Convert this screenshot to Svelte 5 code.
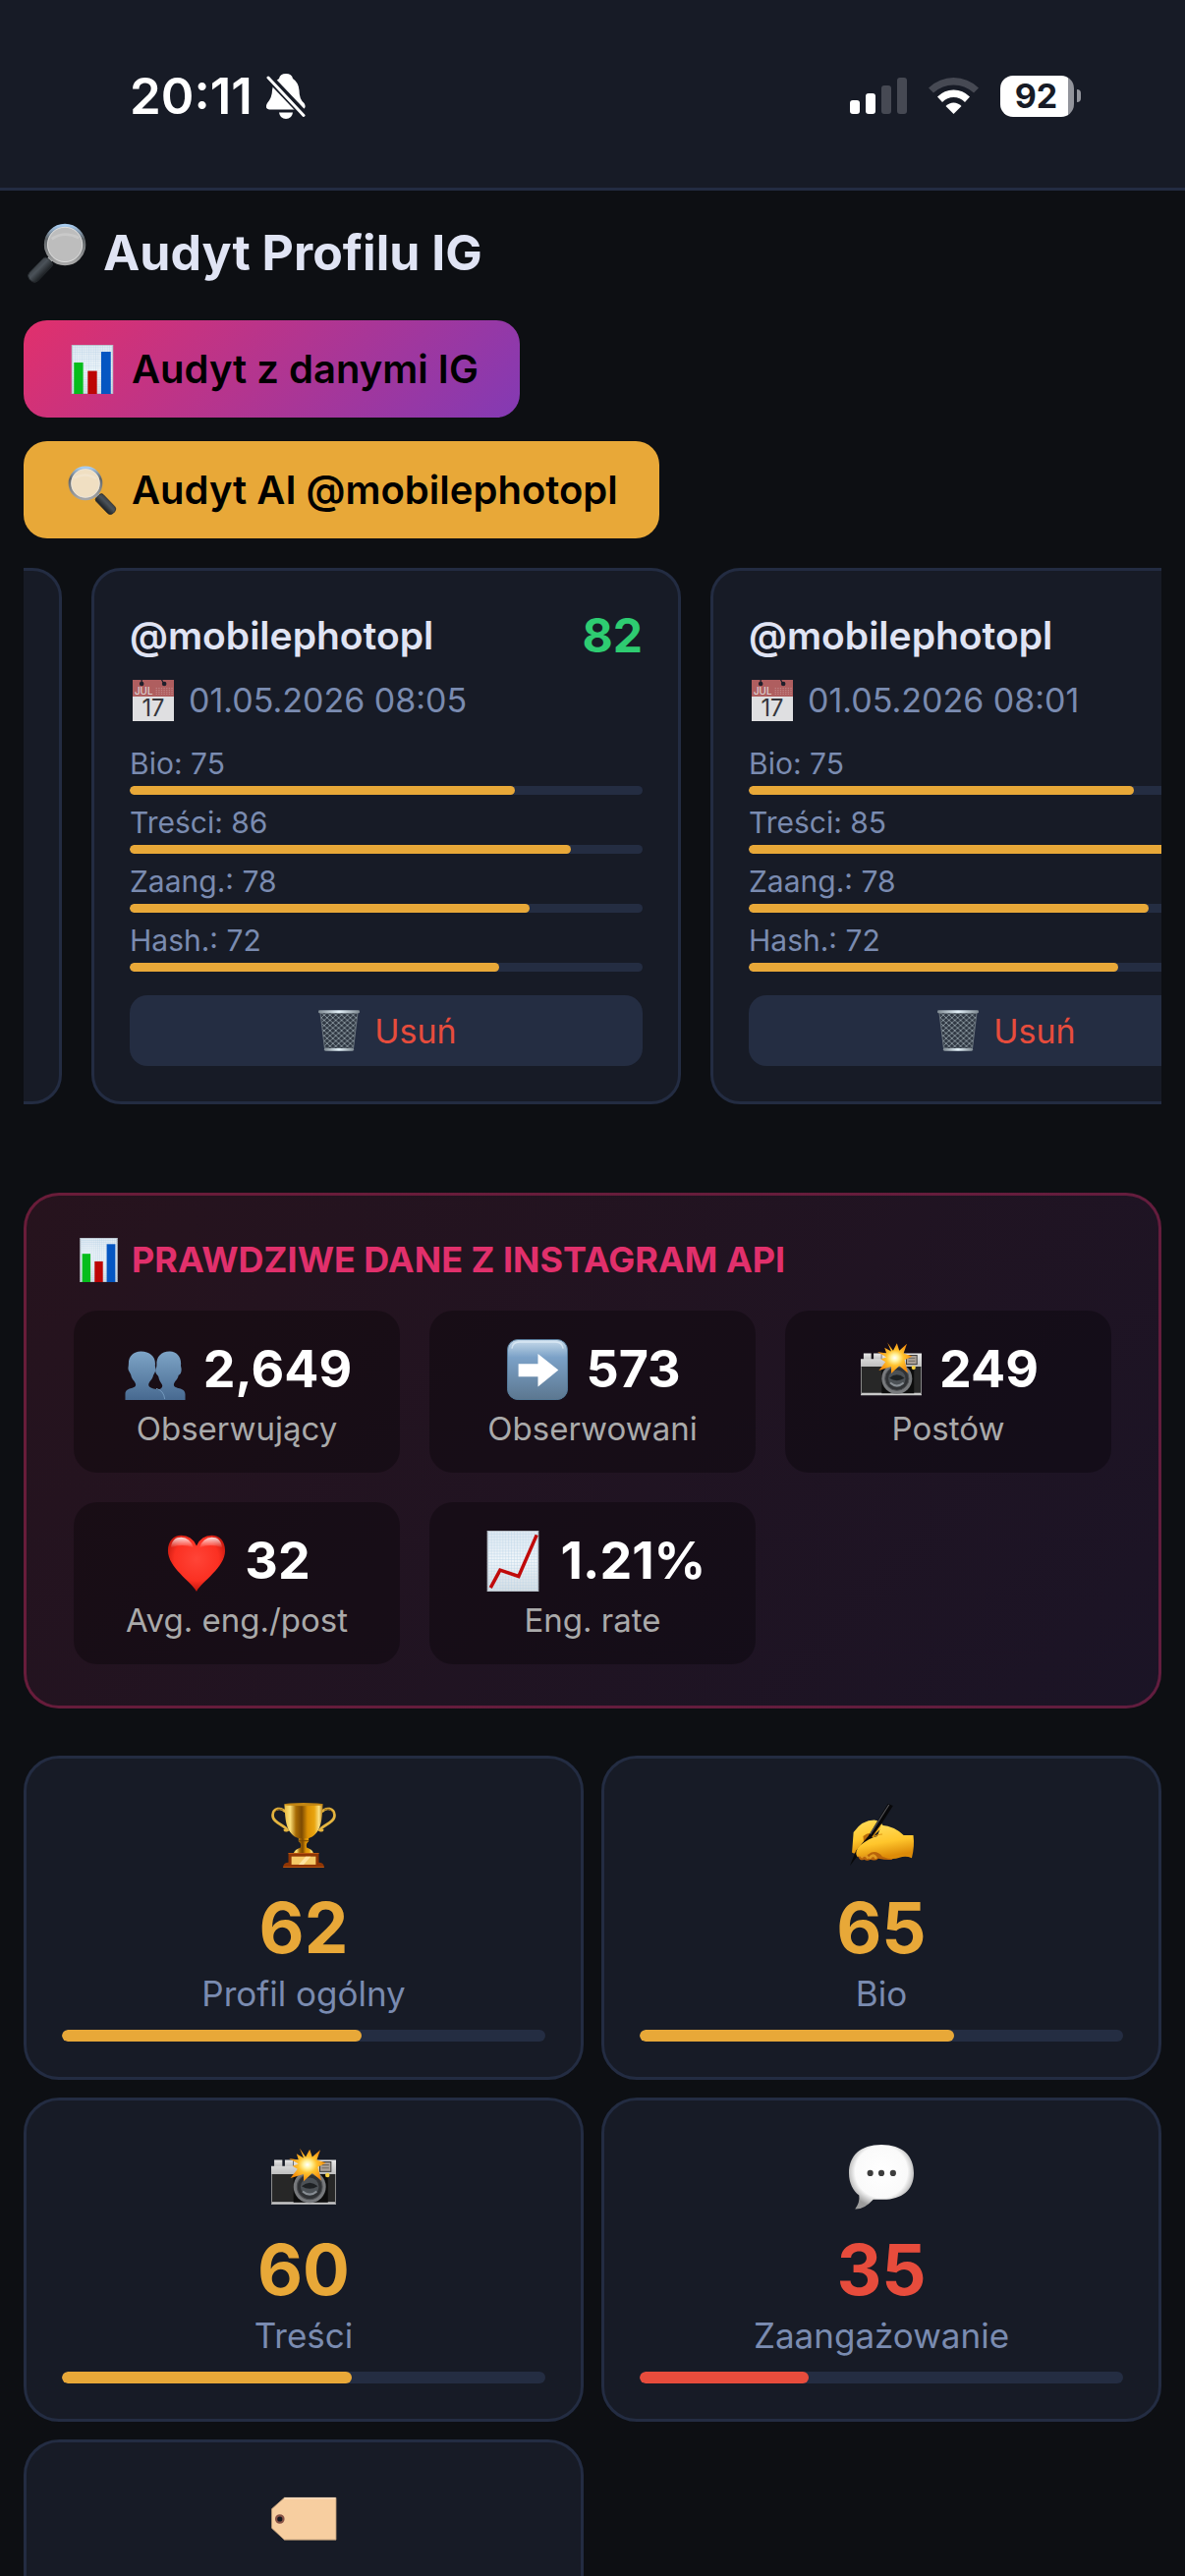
<script>
  import { onMount } from 'svelte';

  let strip;

  const history = [
    { name: '', bars: [] },
    {
      name: '@mobilephotopl', score: 82, date: '01.05.2026 08:05',
      bars: [['Bio', 75], ['Treści', 86], ['Zaang.', 78], ['Hash.', 72]]
    },
    {
      name: '@mobilephotopl', date: '01.05.2026 08:01',
      bars: [['Bio', 75], ['Treści', 85], ['Zaang.', 78], ['Hash.', 72]]
    }
  ];

  const stats = [
    { icon: 'people', value: '2,649', label: 'Obserwujący' },
    { icon: 'arrow', value: '573', label: 'Obserwowani' },
    { icon: 'camera', value: '249', label: 'Postów' },
    { icon: 'heart', value: '32', label: 'Avg. eng./post' },
    { icon: 'trend', value: '1.21%', label: 'Eng. rate' }
  ];

  const scores = [
    { icon: 'trophy', value: 62, label: 'Profil ogólny' },
    { icon: 'hand', value: 65, label: 'Bio' },
    { icon: 'camera', value: 60, label: 'Treści' },
    { icon: 'bubble', value: 35, label: 'Zaangażowanie', low: true },
    { icon: 'tag' }
  ];

  onMount(() => {
    strip.scrollLeft = 561;
  });
</script>

{#snippet icon(name)}
  <svg class="emoji" viewBox="0 0 64 64" aria-hidden="true">
    {#if name === 'search' || name === 'searchLeft'}
      <defs>
        <linearGradient id="rim" x1="0" y1="0" x2="0" y2="1">
          <stop offset="0" stop-color="#a9cdf0" /><stop offset="0.35" stop-color="#5f6468" /><stop offset="1" stop-color="#a8a8a8" />
        </linearGradient>
        <linearGradient id="grip" x1="0" y1="0" x2="1" y2="1">
          <stop offset="0" stop-color="#14171a" /><stop offset="0.45" stop-color="#4b5259" /><stop offset="0.7" stop-color="#15181b" /><stop offset="1" stop-color="#060708" />
        </linearGradient>
      </defs>
      <g transform={name === 'searchLeft' ? 'translate(64 0) scale(-1 1)' : undefined}>
        <path d="M22 42 27 37" stroke="#a9adb1" stroke-width="6" />
        <path d="M3 53 18 37.5q2-2 5 .5l4 4q2 2 0 4.5L12 62q-3 3-7 0l-2-2q-3-4 0-7Z" fill="url(#grip)" stroke="#24282c" />
        <circle cx="41" cy="23" r="20.5" fill={name === 'searchLeft' ? '#f0dfc2' : '#bdbdbd'} stroke="url(#rim)" stroke-width="3.5" />
        <circle cx="41" cy="23" r="18.5" fill="none" stroke="#e8e8e8" stroke-width="1" opacity="0.8" />
        <path d="M27 17q13-9 29-1" fill="none" stroke="#fff" stroke-width="3" opacity="0.18" />
      </g>
    {:else if name === 'chart' || name === 'trend'}
      <defs>
        <pattern id="grid" width="3" height="3" patternUnits="userSpaceOnUse">
          <path d="M0 0H3M0 0V3" stroke="#b8d3e6" stroke-width="0.8" />
        </pattern>
        <linearGradient id="paper" x1="0" y1="0" x2="0" y2="1">
          <stop offset="0" stop-color="#dfe9f2" /><stop offset="0.5" stop-color="#f1f6fa" /><stop offset="1" stop-color="#d5dde3" />
        </linearGradient>
      </defs>
      <rect x="5" width="54" height="64" fill="url(#paper)" />
      <rect x="5" width="54" height="64" fill="url(#grid)" />
      <rect x="5.5" y="0.5" width="53" height="63" fill="none" stroke="#b4bcc4" />
      {#if name === 'chart'}
        <rect x="8" y="23" width="12" height="41" fill="#06bd1c" />
        <rect x="26" y="34" width="12" height="30" fill="#bd0505" />
        <rect x="43.5" y="9" width="12.5" height="55" fill="#0556c2" />
      {:else}
        <path d="M8.5 60 18.5 41.5 38 48 57 4.5" fill="none" stroke="#c00a0a" stroke-width="3.6" />
      {/if}
    {:else if name === 'calendar'}
      <rect x="0" y="0" width="64" height="64" fill="#fdfdfd" />
      <path d="M0 0H64V26H0Z" fill="#c66968" />
      <circle cx="14" cy="6" r="3.5" fill="#20202c" /><circle cx="49" cy="6" r="3.5" fill="#20202c" />
      <path d="M14 0V5M45 0 48 5" stroke="#20202c" stroke-width="2" />
      <path d="M36 13H62M36 16H62M36 19H62M36 22H62" stroke="#e3a5a4" stroke-width="1.2" stroke-dasharray="2 2" />
      <text x="3" y="23" class="cal" font-size="15" fill="#fff">JUL</text>
      <text x="32" y="57" class="cal" font-size="36" text-anchor="middle" fill="#3b3b3f">17</text>
    {:else if name === 'trash'}
      <defs>
        <pattern id="mesh" width="9" height="8" patternUnits="userSpaceOnUse">
          <path d="M0 0 9 8M9 0 0 8" stroke="#93a0a8" stroke-width="1.3" />
        </pattern>
        <linearGradient id="steel"><stop offset="0" stop-color="#7d8890" /><stop offset="0.5" stop-color="#e4f2fa" /><stop offset="1" stop-color="#7d8890" /></linearGradient>
      </defs>
      <path d="M3 4H61L54 61H10Z" fill="#303843" />
      <path d="M3 4H61L54 61H10Z" fill="url(#mesh)" stroke="#68727b" stroke-width="1.5" />
      <rect x="0" y="0.5" width="64" height="4.5" rx="2" fill="url(#steel)" />
      <rect x="9" y="59.5" width="46" height="4" rx="2" fill="url(#steel)" />
    {:else if name === 'people'}
      <defs>
        <linearGradient id="person" x1="0" y1="0" x2="0" y2="1">
          <stop offset="0" stop-color="#7da4c6" /><stop offset="1" stop-color="#476990" />
        </linearGradient>
      </defs>
      <g fill="url(#person)">
        <path d="M47 13c-9 0-14 6-13.5 14 0 4-2 5-1 8s3 3 3 5c1 5 4 7 4 9 0 5-9 4-12 8q-1 3-1 7H63.5V58c0-8-12-5-12-10 0-3 4-5 5-10 2-1 3-3 3-6s-1-3-.5-6c0-8-5-13-11.5-13Z" />
        <path d="M17 13C9 13 4 18 4 26c0 3-1 4 0 7 1 2 2 3 2.5 5 1 5 5 7 5 10 0 5-11 2-11 10v6H42V59c-1-8-17-5-17-11 0-3 4-5 5-10 1-2 2-3 2.5-6 0-3-1-3-.5-6 0-8-6-13-15-13Z" />
      </g>
      <path d="M33 52q8 2 9 11" fill="none" stroke="#7399bd" stroke-width="1" />
    {:else if name === 'arrow'}
      <defs>
        <linearGradient id="tile" x1="0" y1="0" x2="0" y2="1">
          <stop offset="0" stop-color="#c9dcec" /><stop offset="0.2" stop-color="#94b4d2" /><stop offset="0.3" stop-color="#7ba1c7" /><stop offset="1" stop-color="#5c7790" />
        </linearGradient>
      </defs>
      <rect x="0.5" y="0.5" width="63" height="63" rx="11" fill="url(#tile)" stroke="#557a99" />
      <path d="M5 10Q6 3 13 3H51Q58 3 59 10" fill="none" stroke="#e4f0fa" stroke-width="1.5" opacity="0.7" />
      <path d="M12 26H32.5V15.5L54 32.5 32.5 50V39.5H12Z" fill="#fff" />
    {:else if name === 'camera'}
      <defs>
        <radialGradient id="flash"><stop offset="0" stop-color="#fff" /><stop offset="0.22" stop-color="#fff3a0" /><stop offset="0.5" stop-color="#ffc22e" /><stop offset="1" stop-color="#f58a0c" /></radialGradient>
        <linearGradient id="silver" x1="0" y1="0" x2="0" y2="1"><stop offset="0" stop-color="#e9e9e9" /><stop offset="1" stop-color="#bcbcbc" /></linearGradient>
      </defs>
      <path d="M3 15h8v7H3zM13.5 15h8v7h-8z" fill="url(#silver)" />
      <path d="M0 21H22V15H64V30H0Z" fill="url(#silver)" />
      <path d="M0 29H64V58H0Z" fill="#272727" />
      <path d="M0 56.5H64V59H0Z" fill="#c9c9c9" />
      <path d="M.5 29V58M63.5 29V58" stroke="#8a8a8a" />
      <rect x="22" y="29" width="34" height="28" fill="#0c0c0c" />
      <circle cx="38" cy="41.5" r="16" fill="#77797c" />
      <circle cx="38" cy="41.5" r="12.5" fill="#303235" stroke="#505255" />
      <circle cx="38" cy="41.5" r="9" fill="#4c5156" />
      <path d="M30 41q8-7 16 0-8 5-16 0Z" fill="#1e2124" />
      <path d="M31 46q7 6 14 0" stroke="#888e94" fill="none" stroke-width="2" />
      <rect x="48" y="17" width="11" height="9.5" fill="#aaa097" stroke="#3a3a3a" />
      <path d="M50 20H57M50 23H57" stroke="#706960" />
      <circle cx="55.5" cy="30" r="2.2" fill="#f5cf42" />
      <path d="M28 3.5 34 12 38 4.5 40.5 12 48.5 5 45 15 54 18 46 22 49.5 35.5 40.5 28 32 36 32 29 19 33 26 24 21 21 27 19 17.5 13.5 27 15 25 9 32 13Z" fill="url(#flash)" />
    {:else if name === 'heart'}
      <defs>
        <radialGradient id="love" cx="0.5" cy="0.42" r="0.65"><stop offset="0" stop-color="#ff4437" /><stop offset="0.6" stop-color="#fb3022" /><stop offset="1" stop-color="#a90c04" /></radialGradient>
        <linearGradient id="shine" x1="0" y1="0" x2="0" y2="1"><stop offset="0" stop-color="#fff" stop-opacity="0.85" /><stop offset="1" stop-color="#fff" stop-opacity="0" /></linearGradient>
      </defs>
      <path d="M32 64C26 53 2 39 2 21 2 11 8 5 16 5q11 0 16 11Q37 5 48 5c8 0 14 6 14 16 0 18-24 32-30 43Z" fill="url(#love)" />
      <path d="M5 18C6 10 10 7 16 7q9 0 13 11-12-5-24 0ZM59 18C58 10 54 7 48 7q-9 0-13 11 12-5 24 0Z" fill="url(#shine)" />
    {:else if name === 'trophy'}
      <defs>
        <linearGradient id="gold"><stop offset="0" stop-color="#e8b93e" /><stop offset="0.15" stop-color="#fbe07a" /><stop offset="0.3" stop-color="#a86c05" /><stop offset="0.45" stop-color="#7c4a02" /><stop offset="0.6" stop-color="#d98f04" /><stop offset="0.78" stop-color="#e9a510" /><stop offset="0.9" stop-color="#fae084" /><stop offset="1" stop-color="#b5790b" /></linearGradient>
      </defs>
      <g fill="none" stroke-width="2.6">
        <path d="M14 9C10 4 2 5 1.5 12 1 20 14 22 16 27q-2 1-3-1" stroke="#e5b540" />
        <path d="M50 9c4-5 12-4 12.5 3C63 20 50 22 48 27q2 1 3-1" stroke="#e5b540" />
        <path d="M12 7Q6 4 3 10M52 7q6-3 9 3" stroke="#8b5b0b" stroke-width="0.8" />
      </g>
      <path d="M13 1.5H51C50 17 50 31 36 35.5H28C14 31 14 17 13 1.5Z" fill="url(#gold)" />
      <ellipse cx="32" cy="1.6" rx="19" ry="1.6" fill="#c38613" />
      <path d="M27 35H37V38Q34 40 35 44 41 46 42 50H22Q23 46 29 44 30 40 27 38Z" fill="url(#gold)" />
      <path d="M27 37.5H37" stroke="#7c4a02" />
      <path d="M17 49.5H47V59Q52 59 52.5 64H11.5Q12 59 17 59Z" fill="#8f3504" />
      <path d="M17 50H47M12 63.5H52" stroke="#b85410" />
      <rect x="20" y="53" width="24" height="8" fill="#f5ca68" />
      <path d="M27 61 34 53H39L32 61Z" fill="#ffe3a0" />
    {:else if name === 'hand'}
      <defs>
        <linearGradient id="skin" x1="0" y1="0" x2="0.3" y2="1"><stop offset="0" stop-color="#ffe063" /><stop offset="0.6" stop-color="#ffc62c" /><stop offset="1" stop-color="#dd8b08" /></linearGradient>
      </defs>
      <path d="M12 47 9 53q2 5 6 3 3 2 6 0 5 2 8-1 9 2 14 1l-3-10Z" fill="#b9640a" />
      <path d="M12 54q4-5 7 1M20 55q4-6 7 0" fill="none" stroke="#e19a20" stroke-width="2.5" />
      <path d="M3 49 4.5 29Q13 17 25 17 31 18 34 23L24 33Q19 34 12 43L8 49Q5 51 3 49Z" fill="url(#skin)" />
      <path d="M14 33q7-6 10 0l-9 9Z" fill="#b86b0b" />
      <path d="M38.5 1 43.5 3 23 35 12 48 1 62 7 47 19 33Z" fill="#08080a" />
      <path d="M39.5 2 21 31" stroke="#5b5b60" />
      <path d="M32 22Q45 23 54 32H63.5Q65 43 62 54.5 56 52 50 54 42 57 33 53 28 47 22 49 15 54 8 53 5 48 11 42 20 35 28 33Z" fill="url(#skin)" />
      <path d="M31 23 23 34Q29 31 33 31" fill="none" stroke="#e09a15" />
    {:else if name === 'bubble'}
      <defs>
        <radialGradient id="cloud" cx="0.5" cy="0.42" r="0.56"><stop offset="0" stop-color="#fff" /><stop offset="0.72" stop-color="#fafafa" /><stop offset="1" stop-color="#9c9c9c" /></radialGradient>
      </defs>
      <path d="M32 0C53 0 64 11 64 28S52 54 34 54H24Q15 64 6 63.5 11 57 10 50C4 45 0 38 0 28 0 11 11 0 32 0Z" fill="url(#cloud)" />
      <g fill="#3d3d3d"><circle cx="21" cy="28" r="3" /><circle cx="32" cy="28" r="3" /><circle cx="43.5" cy="28" r="3" /></g>
    {:else if name === 'tag'}
      <path d="M13 11H64V52.5H13L.5 41V22Z" fill="#f7cea0" stroke="#b99874" stroke-width="0.8" />
      <path d="M13 11.5H63.5" stroke="#ffe6c9" />
      <circle cx="8.5" cy="32" r="3.6" fill="#151720" stroke="#875347" stroke-width="2.2" />
    {/if}
  </svg>
{/snippet}

<div class="page">
  <header>
    <div class="clock">
      <span>20:11</span>
      <svg class="bell" viewBox="0 0 40 46" aria-hidden="true">
        <path d="M20 0q6 0 7 5 6 4 6.5 12 0 9 5 13 3 5-2 6.5H3q-5-1-2-6.5Q6 24 6 17 7 8 13 5 14 0 20 0Z" fill="#fff" />
        <path d="M13 39.5H27Q26 46 20 46T13 39.5Z" fill="#fff" />
        <path d="M1 2 40 43" stroke="#171b26" stroke-width="8" />
        <path d="M2 4 38 42.5" stroke="#fff" stroke-width="3" stroke-linecap="round" />
      </svg>
    </div>
    <div class="signals">
      <svg class="cell" viewBox="0 0 58 37" aria-hidden="true">
        <rect y="23" width="10" height="14" rx="3" fill="#fff" />
        <rect x="16" y="16" width="10" height="21" rx="3" fill="#fff" />
        <rect x="32" y="8" width="10" height="29" rx="3" fill="#464953" />
        <rect x="48" width="10" height="37" rx="3" fill="#464953" />
      </svg>
      <svg class="wifi" viewBox="0 0 51 37" aria-hidden="true">
        <path d="M0 10.5Q11 0 25.5 0T51 10.5L46 15.5Q37 7.5 25.5 7.5T5 15.5Z" fill="#464953" />
        <path d="M9 19.5Q16 12.5 25.5 12.5T42 19.5L37 25Q32 20 25.5 20T14 25Z" fill="#fff" />
        <path d="M17.5 29Q21 25.5 25.5 25.5T33.5 29L25.5 37Z" fill="#fff" />
      </svg>
      <div class="battery"><span class="level">92</span><span class="nub"></span></div>
    </div>
  </header>

  <main>
    <h1>{@render icon('search')}Audyt Profilu IG</h1>
    <div class="actions">
      <button class="action insta">{@render icon('chart')}Audyt z danymi IG</button>
      <button class="action gold">{@render icon('searchLeft')}Audyt AI @mobilephotopl</button>
    </div>

    <section class="strip" bind:this={strip}>
      {#each history as report}
        <article class="report">
          {#if report.name}
            <div class="who"><strong>{report.name}</strong>{#if report.score}<b>{report.score}</b>{/if}</div>
            <div class="date">{@render icon('calendar')}{report.date}</div>
            <div class="metrics">
              {#each report.bars as [label, value]}
                <div class="metric">
                  <span>{label}: {value}</span>
                  <div class="track"><div class="fill" style="width: {value}%"></div></div>
                </div>
              {/each}
            </div>
            <button class="remove">{@render icon('trash')}Usuń</button>
          {/if}
        </article>
      {/each}
    </section>

    <section class="panel">
      <h2>{@render icon('chart')}PRAWDZIWE DANE Z INSTAGRAM API</h2>
      <div class="stats">
        {#each stats as stat}
          <div class="stat">
            <div class="value">{@render icon(stat.icon)}{stat.value}</div>
            <div class="label">{stat.label}</div>
          </div>
        {/each}
      </div>
    </section>

    <section class="scores">
      {#each scores as score}
        <article class="score" class:low={score.low}>
          <div class="badge">{@render icon(score.icon)}</div>
          {#if score.label}
            <div class="points">{score.value}</div>
            <div class="caption">{score.label}</div>
            <div class="track"><div class="fill" style="width: {score.value}%"></div></div>
          {/if}
        </article>
      {/each}
    </section>
  </main>
</div>

<style>
  :global(body) {
    margin: 0;
    background: #0d0f13;
  }
  .page {
    height: 100vh;
    overflow: hidden;
    background: #0d0f13;
    color: #e0e4f4;
    font-family: Inter, "Liberation Sans", sans-serif;
  }
  * {
    box-sizing: border-box;
  }
  button {
    border: 0;
    font-family: inherit;
    cursor: pointer;
  }
  .emoji {
    flex: none;
    width: 42px;
    height: 42px;
    margin: 0 3px;
    overflow: visible;
  }
  .cal {
    font-family: Inter, sans-serif;
  }

  header {
    display: flex;
    justify-content: space-between;
    align-items: center;
    height: 194px;
    padding: 4px 106px 0 132px;
    border-bottom: 3px solid #232c42;
    background: #171b26;
    color: #fff;
  }
  .clock {
    display: flex;
    align-items: center;
    gap: 14px;
    font-size: 51px;
    line-height: 60px;
    font-weight: 600;
  }
  .bell {
    width: 40px;
    height: 46px;
  }
  .signals {
    display: flex;
    align-items: center;
    gap: 22px;
  }
  .cell {
    width: 58px;
    height: 37px;
  }
  .wifi {
    width: 51px;
    height: 37px;
  }
  .battery {
    display: flex;
    align-items: center;
    gap: 3px;
  }
  .level {
    width: 75px;
    padding-right: 2px;
    border-radius: 13px;
    background: linear-gradient(90deg, #fff 69px, #92949b 69px);
    color: #171b26;
    font-size: 34px;
    line-height: 42px;
    font-weight: 700;
    text-align: center;
  }
  .nub {
    width: 4px;
    height: 13px;
    border-radius: 0 4px 4px 0;
    background: #92949b;
  }

  main {
    padding: 30px 24px;
  }
  h1 {
    display: flex;
    align-items: center;
    gap: 14px;
    margin: 0 0 36px;
    font-size: 50px;
    line-height: 66px;
    font-weight: 700;
  }
  h1 :global(.emoji) {
    width: 61px;
    height: 61px;
  }
  .actions {
    display: flex;
    flex-direction: column;
    align-items: flex-start;
    gap: 24px;
    margin-bottom: 30px;
  }
  .action {
    display: flex;
    align-items: center;
    gap: 12px;
    height: 99px;
    padding: 0 42px;
    border-radius: 24px;
    color: #000;
    font-size: 40px;
    font-weight: 600;
  }
  .action :global(.emoji) {
    width: 50px;
    height: 50px;
  }
  .insta {
    background: linear-gradient(135deg, #e1306c, #833ab4);
  }
  .gold {
    background: #e8a838;
  }

  .strip {
    display: flex;
    gap: 30px;
    overflow-x: auto;
    scrollbar-width: none;
    margin-bottom: 90px;
  }
  .report {
    flex: 0 0 600px;
    padding: 36px;
    border: 3px solid #232c42;
    border-radius: 30px;
    background: #171b26;
  }
  .who {
    display: flex;
    justify-content: space-between;
    align-items: center;
    height: 58px;
    font-size: 39px;
  }
  .who strong {
    font-weight: 600;
  }
  .who b {
    color: #2ecc71;
    font-size: 48px;
    font-weight: 700;
  }
  .date {
    display: flex;
    align-items: center;
    gap: 12px;
    margin: 15px 0 24px;
    color: #7a8bb0;
    font-size: 34px;
    line-height: 45px;
  }
  .date :global(.emoji) {
    opacity: 0.87;
  }
  .metrics {
    display: flex;
    flex-direction: column;
    gap: 10px;
  }
  .metric {
    display: flex;
    flex-direction: column;
    gap: 5px;
    color: #7a8bb0;
    font-size: 30px;
    line-height: 36px;
  }
  .track {
    height: 9px;
    overflow: hidden;
    border-radius: 6px;
    background: #242d42;
  }
  .fill {
    height: 100%;
    border-radius: 6px;
    background: #e8a838;
  }
  .remove {
    display: flex;
    justify-content: center;
    align-items: center;
    gap: 12px;
    width: 100%;
    height: 72px;
    margin-top: 24px;
    padding: 0;
    border-radius: 18px;
    background: #242d42;
    color: #e74c3c;
    font-size: 34px;
  }

  .panel {
    margin-bottom: 48px;
    padding: 42px 48px;
    border: 3px solid rgba(225, 48, 108, 0.36);
    border-radius: 36px;
    background: linear-gradient(135deg, rgba(225, 48, 108, 0.12), rgba(131, 58, 180, 0.12)) border-box;
  }
  h2 {
    display: flex;
    align-items: center;
    gap: 8px;
    margin: 0 0 29px;
    color: #e1306c;
    font-size: 36px;
    line-height: 46px;
    font-weight: 700;
  }
  h2 :global(.emoji) {
    width: 45px;
    height: 45px;
  }
  .stats {
    display: grid;
    grid-template-columns: repeat(3, 1fr);
    gap: 30px;
  }
  .stat {
    display: flex;
    flex-direction: column;
    gap: 7px;
    padding: 27px 0 25px;
    border-radius: 24px;
    background: rgba(0, 0, 0, 0.3);
    text-align: center;
  }
  .value {
    display: flex;
    justify-content: center;
    align-items: center;
    gap: 15px;
    color: #fff;
    font-size: 52px;
    line-height: 66px;
    font-weight: 700;
  }
  .value :global(.emoji) {
    width: 62px;
    height: 62px;
  }
  .label {
    color: #aaa;
    font-size: 33px;
    line-height: 40px;
  }

  .scores {
    display: grid;
    grid-template-columns: repeat(2, 1fr);
    gap: 18px;
  }
  .score {
    min-height: 330px;
    padding: 36px;
    border: 3px solid #232c42;
    border-radius: 36px;
    background: #171b26;
    text-align: center;
  }
  .badge {
    display: flex;
    justify-content: center;
    align-items: center;
    height: 84px;
    margin-bottom: 8px;
  }
  .badge :global(.emoji) {
    width: 66px;
    height: 66px;
  }
  .points {
    color: #e8a838;
    font-size: 71px;
    line-height: 88px;
    font-weight: 700;
  }
  .caption {
    margin-bottom: 14px;
    color: #7a8bb0;
    font-size: 35px;
    line-height: 46px;
  }
  .score .track {
    height: 12px;
  }
  .low .points {
    color: #e74c3c;
  }
  .low .fill {
    background: #e74c3c;
  }
</style>
